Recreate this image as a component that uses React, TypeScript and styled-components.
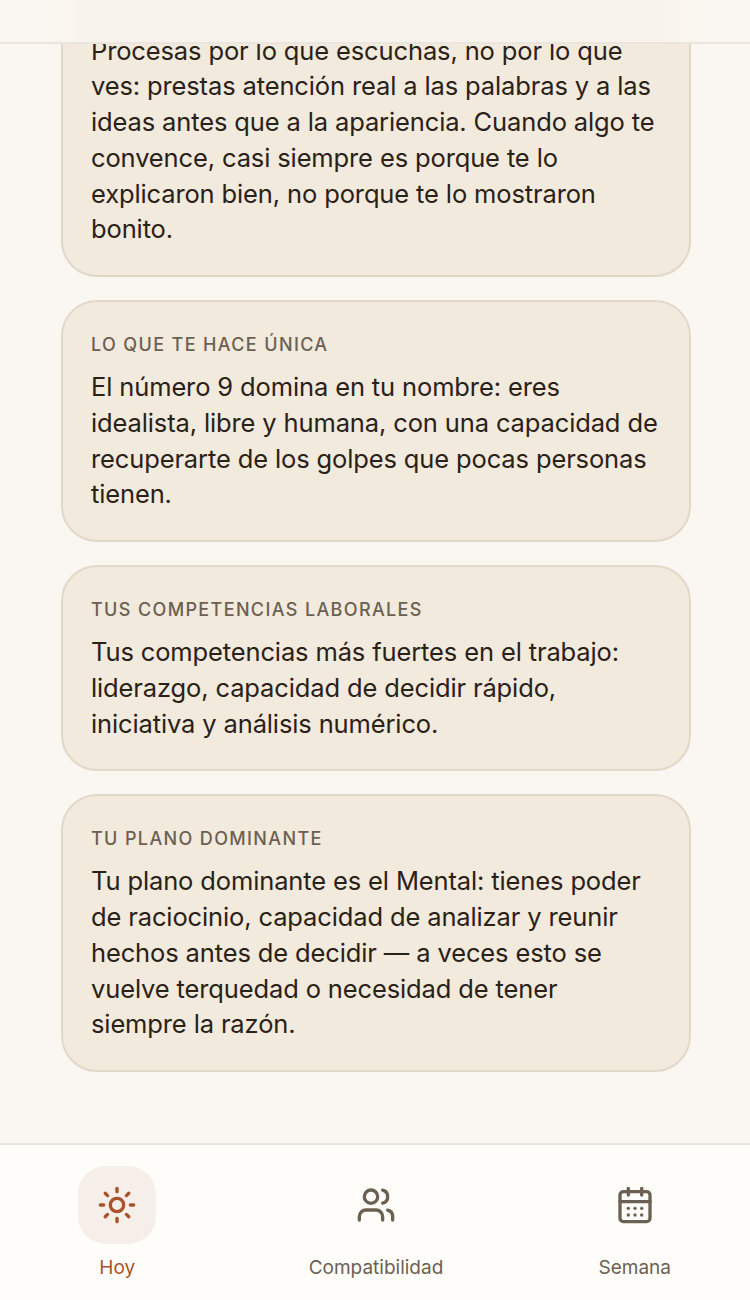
import React from 'react';
import styled, { createGlobalStyle } from 'styled-components';
import { Sun, Users, CalendarDays } from 'lucide-react';

const GlobalStyle = createGlobalStyle`
  html, body {
    margin: 0;
    padding: 0;
    background: #faf7f2;
  }
`;

const Screen = styled.div`
  position: relative;
  width: 750px;
  height: 1300px;
  display: flex;
  flex-direction: column;
  overflow: hidden;
  background: #faf7f2;
  font-family: Inter, 'Noto Sans', sans-serif;
`;

const TopBar = styled.div`
  position: absolute;
  top: 0;
  left: 0;
  right: 0;
  height: 42px;
  background:
    radial-gradient(ellipse 170px 9px at 245px 8px, #f7f3eb, transparent),
    linear-gradient(90deg, #faf7f2 40px, #f8f4ed 85px, #f8f4ed 665px, #faf7f2 710px);
  border-bottom: 2px solid #ebe6dd;
  z-index: 2;
`;

const Feed = styled.main`
  flex: 1;
  min-height: 0;
  display: flex;
  flex-direction: column;
  justify-content: flex-end;
  gap: 23px;
  padding: 0 59px 71px 61px;
`;

const Card = styled.section`
  flex-shrink: 0;
  padding: 29px 30px 28px 28px;
  background: #f2eadd;
  border: 2px solid #e1d8c8;
  border-radius: 36px;
`;

const CardLabel = styled.h3`
  margin: 0 0 11px;
  color: #6b6052;
  font-size: 18px;
  font-weight: 500;
  line-height: 27px;
  letter-spacing: 1.36px;
  text-transform: uppercase;
`;

const CardText = styled.p`
  margin: 0;
  color: #2a2118;
  font-size: 25.5px;
  font-weight: 400;
  line-height: 35.75px;
  letter-spacing: -0.13px;
`;

const BottomNav = styled.nav`
  flex-shrink: 0;
  height: 157px;
  box-sizing: border-box;
  display: flex;
  justify-content: space-around;
  align-items: flex-start;
  padding: 21px 0 0 2px;
  background: #fffdf9;
  border-top: 2px solid #ebe6dd;
`;

const NavItem = styled.a<{ $active?: boolean }>`
  display: flex;
  flex-direction: column;
  align-items: center;
  gap: 10px;
  color: ${({ $active }) => ($active ? '#a9532b' : '#6b6052')};
  font-size: 19px;
  font-weight: 400;
  line-height: 28px;
`;

const IconWrap = styled.span<{ $active?: boolean }>`
  width: 78px;
  height: 78px;
  display: flex;
  align-items: center;
  justify-content: center;
  border-radius: 28px;
  background: ${({ $active }) => ($active ? '#f6eee8' : 'transparent')};
`;

const cards = [
  {
    label: '',
    text: 'Procesas por lo que escuchas, no por lo que ves: prestas atención real a las palabras y a las ideas antes que a la apariencia. Cuando algo te convence, casi siempre es porque te lo explicaron bien, no porque te lo mostraron bonito.',
  },
  {
    label: 'Lo que te hace única',
    text: 'El número 9 domina en tu nombre: eres idealista, libre y humana, con una capacidad de recuperarte de los golpes que pocas personas tienen.',
  },
  {
    label: 'Tus competencias laborales',
    text: 'Tus competencias más fuertes en el trabajo: liderazgo, capacidad de decidir rápido, iniciativa y análisis numérico.',
  },
  {
    label: 'Tu plano dominante',
    text: 'Tu plano dominante es el Mental: tienes poder de raciocinio, capacidad de analizar y reunir hechos antes de decidir — a veces esto se vuelve terquedad o necesidad de tener siempre la razón.',
  },
];

const App: React.FC = () => {
  return (
    <Screen>
      <GlobalStyle />
      <TopBar />
      <Feed>
        {cards.map((card) => (
          <Card key={card.text}>
            {card.label && <CardLabel>{card.label}</CardLabel>}
            <CardText>{card.text}</CardText>
          </Card>
        ))}
      </Feed>
      <BottomNav>
        <NavItem $active>
          <IconWrap $active>
            <Sun size={40} />
          </IconWrap>
          Hoy
        </NavItem>
        <NavItem>
          <IconWrap>
            <Users size={40} />
          </IconWrap>
          Compatibilidad
        </NavItem>
        <NavItem>
          <IconWrap>
            <CalendarDays size={40} />
          </IconWrap>
          Semana
        </NavItem>
      </BottomNav>
    </Screen>
  );
};

export default App;
